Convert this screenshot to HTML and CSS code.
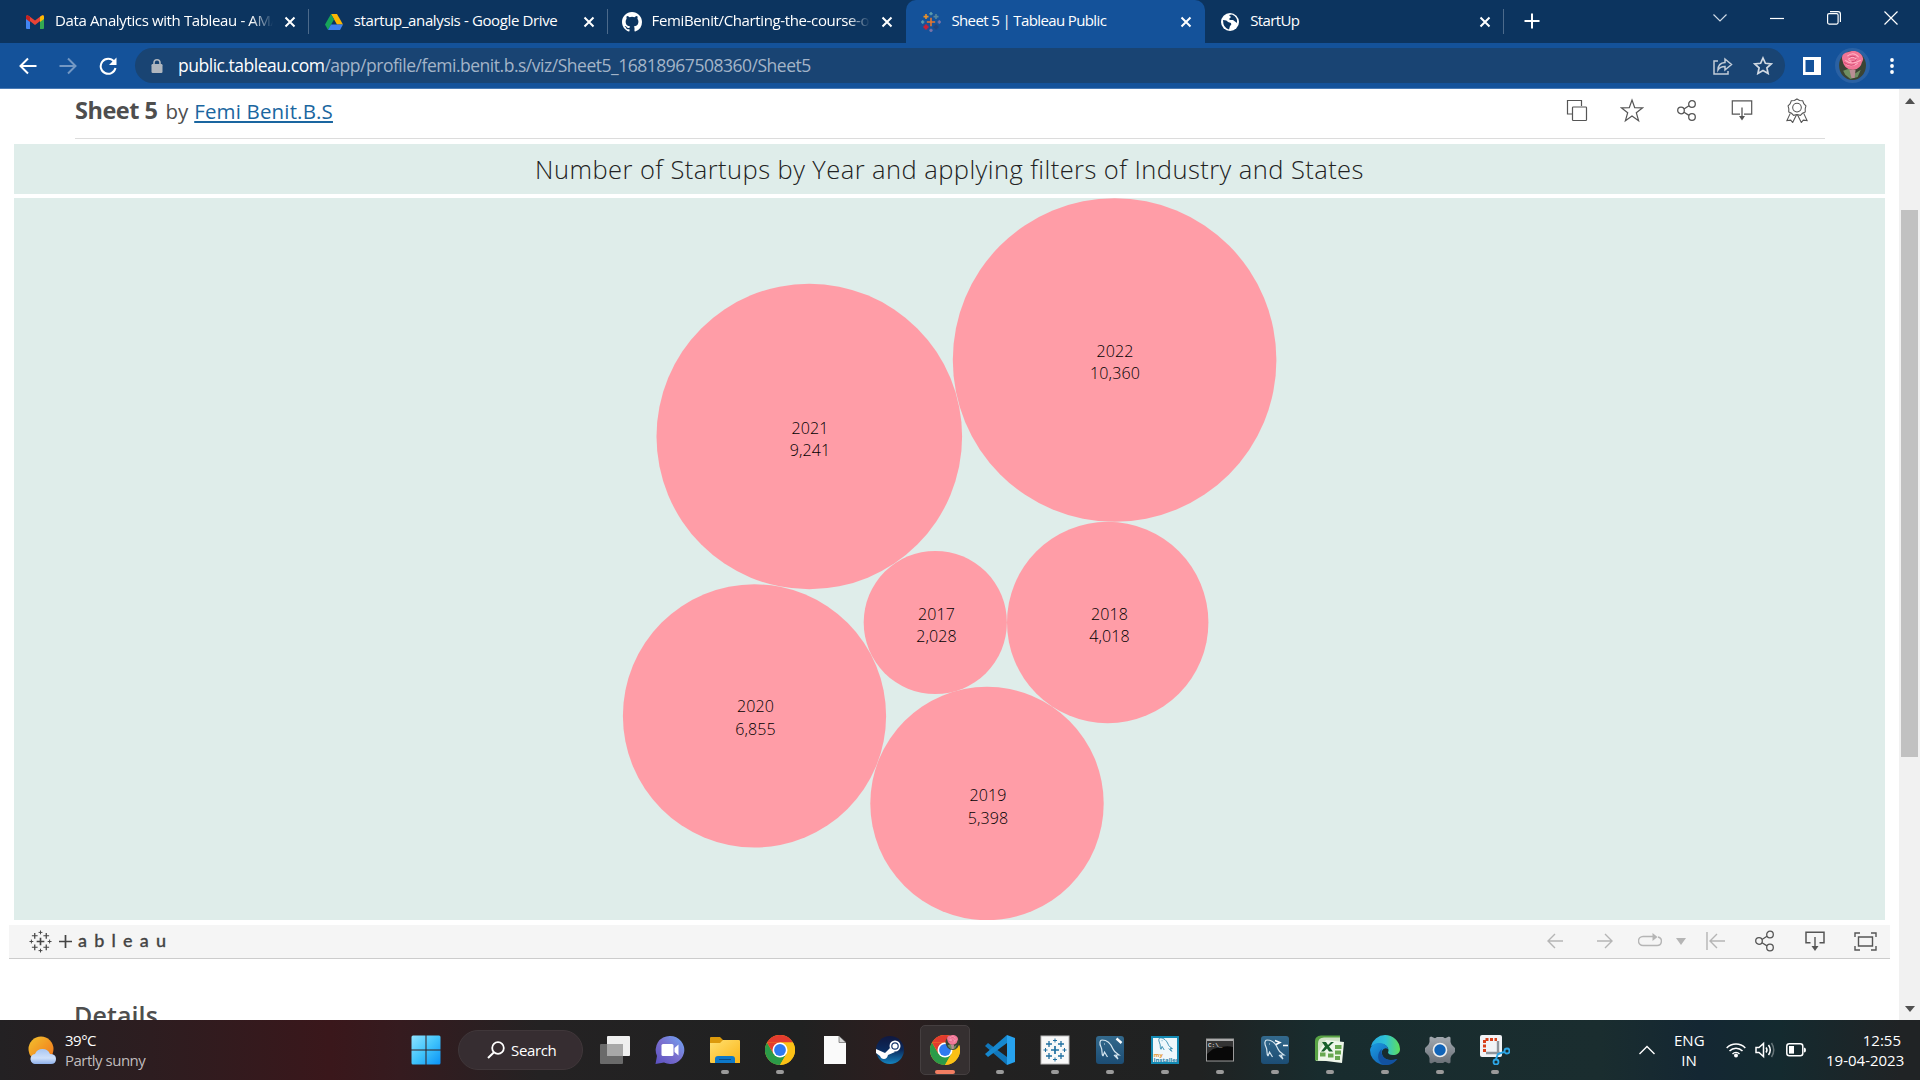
FILE: index.html
```html
<!DOCTYPE html>
<html lang="en"><head><meta charset="utf-8"><title>Sheet 5 | Tableau Public</title><link rel="stylesheet" href="styles.css"></head>
<body>
<svg width="0" height="0" class="defs">
<defs>
<linearGradient id="win" x1="0" y1="0" x2="1" y2="1"><stop offset="0" stop-color="#8fe3ff"/><stop offset=".5" stop-color="#41c4fb"/><stop offset="1" stop-color="#0a92f7"/></linearGradient>
<linearGradient id="sun" x1="0" y1="0" x2="1" y2="1"><stop offset="0" stop-color="#f2c22e"/><stop offset="1" stop-color="#f2701a"/></linearGradient>
<linearGradient id="cloud" x1="0" y1="0" x2="0" y2="1"><stop offset="0" stop-color="#a9c6f2"/><stop offset=".6" stop-color="#cfe0fa"/><stop offset="1" stop-color="#8eb0ea"/></linearGradient>
<linearGradient id="meet" x1="1" y1="0" x2="0" y2="1"><stop offset="0" stop-color="#6fa8f7"/><stop offset=".5" stop-color="#7a6fce"/><stop offset="1" stop-color="#5a50c0"/></linearGradient>
<linearGradient id="folder" x1="0" y1="0" x2="1" y2="1"><stop offset="0" stop-color="#ffe070"/><stop offset="1" stop-color="#fbb517"/></linearGradient>
<linearGradient id="steam" x1="0" y1="0" x2="0" y2="1"><stop offset="0" stop-color="#101840"/><stop offset=".5" stop-color="#0b2a5c"/><stop offset="1" stop-color="#1484c0"/></linearGradient>
<linearGradient id="mysql" x1="0" y1="0" x2="0" y2="1"><stop offset="0" stop-color="#33698c"/><stop offset="1" stop-color="#1c4d74"/></linearGradient>
<linearGradient id="edgeA" x1="0" y1="0" x2="1" y2="0"><stop offset="0" stop-color="#25a8e0"/><stop offset=".5" stop-color="#2fc2d6"/><stop offset="1" stop-color="#5fe05a"/></linearGradient>
<linearGradient id="edgeB" x1="0" y1="0" x2="1" y2="1"><stop offset="0" stop-color="#1b9de2"/><stop offset="1" stop-color="#0f4fa6"/></linearGradient>
<linearGradient id="gear" x1="0" y1="0" x2="0" y2="1"><stop offset="0" stop-color="#a3a9b0"/><stop offset="1" stop-color="#6a7077"/></linearGradient>
<symbol id="close" viewBox="0 0 12 12"><path d="M1.5 1.5l9 9M10.500 1.500l-9 9" stroke="#fff" stroke-width="2" fill="none"/></symbol>
<symbol id="chrome" viewBox="0 0 30 30"><circle cx="15" cy="15" r="15" fill="#fbc116"/><path d="M2 7.500A15 15 0 0 1 28 7.500H15Z" fill="#e33b2e"/><path d="M2 7.500A15 15 0 0 0 15 30L21.500 18.750 8.500 18.750Z" fill="#2b9b48"/><path d="M15 7.500H28A15 15 0 0 1 15 30L21.500 18.750Z" fill="#fbc116"/><path d="M2 7.500L15 7.500 8.500 18.750Z" fill="#e33b2e"/><circle cx="15" cy="15" r="7.500" fill="#fff"/><circle cx="15" cy="15" r="5.900" fill="#2f7af0"/></symbol>
<symbol id="rose" viewBox="0 0 26 28"><ellipse cx="13" cy="14" rx="13" ry="14" fill="#3b4434"/><path d="M4 19l6-2 5 5 6-4-3 7-7 2-5-4Z" fill="#6f8f62"/><path d="M10 18h6l-1 8h-3Z" fill="#b88e94"/><path d="M3 8Q2 2 9 1q7-3 12 2 4 4 1 8-1 6-8 7-9 1-11-10Z" fill="#f27596"/><path d="M8 5q6-5 11 1M6 9q6 5 15 0M9 8q4-4 8 0-4 4-8 0M7 13q6 3 11-1" fill="none" stroke="#ffb3c6" stroke-width="1"/><path d="M10 6q3-2 6 0M5 11q5 4 10 2M12 10q3 1 5-2" fill="none" stroke="#d44a73" stroke-width="1"/></symbol>
<symbol id="globe" viewBox="0 0 18 18"><circle cx="9" cy="9" r="9" fill="#fff"/><path d="M2 7q4 0 5 2l3 1q1 2-1 3l-1 3.500Q2 15 2 7ZM8 2l2 2-2 2 1 1h3l4 3q1-6-5-8.500Z" fill="#0d3560"/></symbol>
<symbol id="github" viewBox="0 0 16 16"><path fill="#fff" d="M8 0C3.580 0 0 3.580 0 8c0 3.540 2.290 6.530 5.470 7.590.4.070.55-.17.550-.38 0-.19-.01-.82-.01-1.490-2.010.37-2.530-.49-2.690-.94-.09-.23-.48-.94-.82-1.130-.28-.15-.68-.52-.01-.53.630-.01 1.080.58 1.230.82.720 1.210 1.870.87 2.330.66.070-.52.280-.87.510-1.070-1.780-.2-3.640-.89-3.640-3.950 0-.87.310-1.590.82-2.150-.08-.2-.36-1.020.08-2.120 0 0 .67-.21 2.200.82a7.600 7.600 0 0 1 4 0c1.530-1.040 2.200-.82 2.200-.82.440 1.100.160 1.920.080 2.120.510.560.82 1.270.82 2.150 0 3.070-1.870 3.750-3.650 3.950.290.250.540.73.540 1.480 0 1.070-.01 1.930-.01 2.200 0 .21.150.46.550.38A8 8 0 0 0 16 8c0-4.420-3.580-8-8-8Z"/></symbol>
<symbol id="plusmark" viewBox="0 0 24 24"><g fill="none" stroke="currentColor" stroke-width="1.300"><path d="M12 8v8M8 12h8" stroke-width="1.700"/><path d="M6 3v6M3 6h6M18 3v6M15 6h6M6 15v6M3 18h6M18 15v6M15 18h6"/><path d="M12 .5v4M10 2.500h4M12 19.500v4M10 21.500h4M2.500 10v4M.5 12h4M21.500 10v4M19.500 12h4" stroke-width="1"/></g></symbol>
<symbol id="share" viewBox="0 0 22 22"><g fill="none" stroke="#555" stroke-width="1.300"><circle cx="5" cy="11" r="3.300"/><circle cx="16" cy="4.500" r="3.300"/><circle cx="16" cy="17.500" r="3.300"/><path d="M8 9.500l5-3.300M8 12.700l5 3.200"/></g></symbol>
<symbol id="download" viewBox="0 0 22 22"><path d="M9 14.700H1.300V1.300h19.400v13.400H13" fill="none" stroke="#555" stroke-width="1.200"/><path d="M11 8v10" stroke="#555" stroke-width="1.300"/><path d="M8 16.500h6l-3 4.500Z" fill="#555"/></symbol>
<symbol id="download-wide" viewBox="0 0 20 21"><path d="M5.500 11.800H1V1.300h18v10.500h-4.500" fill="none" stroke="#555" stroke-width="1.500"/><path d="M10 6v11" stroke="#555" stroke-width="1.400"/><path d="M6.500 15h7L10 20Z" fill="#555" stroke="none"/></symbol>
<symbol id="dolphin" viewBox="0 0 28 28"><path d="M7 20C5 17 7 15 5 11 3 7 4 4 6 4c5 0 9 4 11 9 1 3 3 4 6 6h-3l2 4-4-4M7 20l1.500-4 3 5M8 8h1" fill="none" stroke="currentColor" stroke-width="1.200"/></symbol>
</defs>
</svg>

<header class="browser">
 <div class="tabs">
  <div class="tab"><svg class="fav" viewBox="0 0 18 18"><path d="M0 4v11q0 1 1 1h3V7Z" fill="#4285f4"/><path d="M14 7v9h3q1 0 1-1V4Z" fill="#34a853"/><path d="M0 4q0-3 3-1l6 4.500L15 3q3-2 3 1v1l-9 7-9-7Z" fill="#ea4335"/><path d="M14 4l1-1q3-2 3 1v2l-4 3Z" fill="#fbbc04"/><path d="M0 4q0-2 2-1.500L4 4v5L0 6Z" fill="#c5221f"/></svg><span class="tt fade">Data Analytics with Tableau - AMA</span><svg class="x"><use href="#close"/></svg></div>
  <div class="tab"><svg class="fav" viewBox="0 0 18 18"><path d="M6 1h6l6 10.500h-6Z" fill="#fbb703"/><path d="M6 1l3 5.500L3 17 0 11.500Z" fill="#17a35a"/><path d="M6 11.500h12L15 17H3Z" fill="#3d80ef"/></svg><span class="tt">startup_analysis - Google Drive</span><svg class="x"><use href="#close"/></svg></div>
  <div class="tab nosep"><svg class="fav gh"><use href="#github"/></svg><span class="tt fade">FemiBenit/Charting-the-course-of</span><svg class="x"><use href="#close"/></svg></div>
  <div class="tab active"><svg class="fav tb" viewBox="0 0 24 24"><g fill="none" stroke-width="1.900"><path d="M12 7v10M7 12h10" stroke="#e8762d"/><path d="M6 2.500v6M3 5.500h6" stroke="#eb9129"/><path d="M18 2.500v6M15 5.500h6" stroke="#59879b"/><path d="M6 15v6M3 18h6" stroke="#c72035" stroke-width="3"/><path d="M18 15v6M15 18h6" stroke="#1f447e" stroke-width="3"/><path d="M12 0v4M10 2h4M2 10v4M0 12h4" stroke="#5c9cae"/><path d="M22 10v4M20 12h4M12 20v4M10 22h4" stroke="#7a73a8"/></g></svg><span class="tt tight">Sheet 5 | Tableau Public</span><svg class="x"><use href="#close"/></svg></div>
  <div class="tab"><svg class="fav"><use href="#globe"/></svg><span class="tt tight">StartUp</span><svg class="x"><use href="#close"/></svg></div>
  <svg class="newtab" viewBox="0 0 16 16"><path d="M8 .5v15M.5 8h15" stroke="#fff" stroke-width="2"/></svg>
  <div class="wincontrols">
   <svg viewBox="0 0 14 14"><path d="M.5 3.500L7 10l6.500-6.500" fill="none" stroke="#cfdae6" stroke-width="1.200"/></svg>
   <svg viewBox="0 0 14 14"><path d="M0 7.500h14" stroke="#fff" stroke-width="1.200"/></svg>
   <svg viewBox="0 0 14 14"><rect x=".6" y="2.600" width="10.500" height="10.500" rx="1.500" fill="none" stroke="#fff" stroke-width="1.200"/><path d="M3 .6h8q2.400 0 2.400 2.400v8" fill="none" stroke="#fff" stroke-width="1.200"/></svg>
   <svg viewBox="0 0 14 14"><path d="M.5.5l13 13M13.500.5l-13 13" stroke="#fff" stroke-width="1.200"/></svg>
  </div>
 </div>
 <div class="toolbar">
  <svg class="nav" viewBox="0 0 18 18"><path d="M17.500 9H2M9 1.500L1.500 9 9 16.500" fill="none" stroke="#fff" stroke-width="2"/></svg>
  <svg class="nav" viewBox="0 0 18 18"><path d="M.5 9H16M9 1.500L16.500 9 9 16.500" fill="none" stroke="#7398c4" stroke-width="2"/></svg>
  <svg class="nav" viewBox="0 0 18 18"><path d="M15 4.500A7.500 7.500 0 1 0 16.500 11" fill="none" stroke="#fff" stroke-width="2"/><path d="M17.500.5V8H10Z" fill="#fff"/></svg>
  <div class="omnibox">
   <svg class="lock" viewBox="0 0 12 14"><rect x=".5" y="5" width="11" height="9" rx="1.200" fill="#b0b7bf"/><path d="M3 6V3.800a3 3 0 0 1 6 0V6" fill="none" stroke="#b0b7bf" stroke-width="1.600"/></svg>
   <span class="url"><b>public.tableau.com</b>/app/profile/femi.benit.b.s/viz/Sheet5_16818967508360/Sheet5</span>
   <svg class="oi" viewBox="0 0 20 18"><path d="M5 4H1v13h14v-3" fill="none" stroke="#c2ccd8" stroke-width="1.500"/><path d="M5 13q0-7 7-7.500V2l6.500 5.500L12 13V9.500Q7 9.500 5 13Z" fill="none" stroke="#c2ccd8" stroke-width="1.500"/></svg>
   <svg class="oi st" viewBox="0 0 20 19"><path d="M10 2l2.400 5.300 5.800.6-4.300 3.900 1.200 5.700L10 14.600l-5.100 2.900 1.200-5.700L1.800 7.900l5.800-.6Z" fill="none" stroke="#d2dae3" stroke-width="1.700"/></svg>
  </div>
  <svg class="panel" viewBox="0 0 18 18"><path d="M0 0h18v18H0ZM2.500 3v12H11V3Z" fill="#fff" fill-rule="evenodd"/></svg>
  <div class="avatar"><svg><use href="#rose"/></svg></div>
  <svg class="dots" viewBox="0 0 4 16"><circle cx="2" cy="2" r="1.900"/><circle cx="2" cy="8" r="1.900"/><circle cx="2" cy="14" r="1.900"/></svg>
 </div>
</header>

<div class="page">
 <main>
  <div class="vizhead">
   <h1>Sheet 5</h1><span class="by">by</span><a>Femi Benit.B.S</a>
   <div class="actions">
    <svg viewBox="0 0 24 24"><path d="M7 15.500H2.500v-13.500h14V7.500" fill="none" stroke="#555" stroke-width="1.200"/><rect x="7.500" y="8.500" width="14" height="13.500" rx=".8" fill="none" stroke="#555" stroke-width="1.200"/></svg>
    <svg viewBox="0 0 24 24"><path d="M12 1.500l2.700 7.700 8 .1-6.400 4.900 2.300 8L12 17.500l-6.600 4.700 2.300-8L1.300 9.300l8-.1Z" fill="none" stroke="#555" stroke-width="1.200"/></svg>
    <svg viewBox="-1 -1 24 24"><use href="#share" x="0" y="0" width="22" height="22"/></svg>
    <svg viewBox="-1 -1 24 24"><use href="#download" width="22" height="22"/></svg>
    <svg viewBox="0 0 24 26"><g fill="none" stroke="#555" stroke-width="1.100"><path d="M12 1l2.700 1.600 3.200.3 1.200 3 2.200 2.300-.8 3.100.1 3.200-2.900 1.400L15.500 18 12 17.200 8.500 18l-2.200-2.100-2.900-1.400.1-3.200-.8-3.100 2.200-2.300 1.200-3 3.200-.3Z"/><circle cx="12" cy="10" r="4.500"/><path d="M5 16L1.500 23.500l4-.5 2 2.500 4-8M19 16l3.500 7.500-4-.5-2 2.500-4-8"/></g></svg>
   </div>
  </div>
  <section class="viz">
   <h2>Number of Startups by Year and applying filters of Industry and States</h2>
   <svg class="chart" viewBox="14 198 1871 722">
    <g class="bubbles"><circle cx="1114.600" cy="360" r="161.800"/><circle cx="809.300" cy="436.500" r="152.800"/><circle cx="935.300" cy="622.500" r="71.600"/><circle cx="1107.700" cy="622.500" r="100.700"/><circle cx="754.500" cy="715.900" r="131.600"/><circle cx="987" cy="803.500" r="116.700"/></g>
    <g class="labels">
     <text x="1115" y="356.500">2022</text><text x="1115" y="378.500">10,360</text>
     <text x="810" y="433.500">2021</text><text x="810" y="456">9,241</text>
     <text x="936.500" y="619.500">2017</text><text x="936.500" y="642">2,028</text>
     <text x="1109.500" y="619.500">2018</text><text x="1109.500" y="642">4,018</text>
     <text x="755.500" y="712">2020</text><text x="755.500" y="734.500">6,855</text>
     <text x="988" y="801">2019</text><text x="988" y="823.500">5,398</text>
    </g>
   </svg>
  </section>
  <div class="vizbar">
   <svg class="tlogo"><use href="#plusmark"/></svg>
   <svg class="tplus" viewBox="0 0 13 15"><path d="M6.500 1v13M0 7.500h13" stroke="#444" stroke-width="1.700"/></svg><span class="wordmark">ableau</span>
   <div class="vizicons">
    <svg class="i1" viewBox="0 0 16 16"><path d="M16 8H1M8 1L1 8l7 7"/></svg>
    <svg class="i2" viewBox="0 0 16 16"><path d="M0 8h15M8 1l7 7-7 7"/></svg>
    <svg class="i3" viewBox="0 0 24 16"><path d="M15 3.500H5a4.300 4.300 0 0 0 0 9h14a4.300 4.300 0 0 0 1-8.500"/><path d="M14.500 0v8l5-4Z" fill="#b5b5b5" stroke="none"/></svg>
    <svg class="i4" viewBox="0 0 10 7"><path d="M0 0h10L5 7Z" fill="#b5b5b5" stroke="none"/></svg>
    <svg class="i5" viewBox="0 0 19 20"><path d="M1 1v18M19 10H4M11 3l-7 7 7 7"/></svg>
    <svg class="i6"><use href="#share"/></svg>
    <svg class="i7"><use href="#download-wide"/></svg>
    <svg class="i8" viewBox="0 0 23 19"><path d="M1 5V1h5M17 1h5v4M22 14v4h-5M6 18H1v-4M4.500 5h14v9h-14Z"/></svg>
   </div>
  </div>
  <h3>Details</h3>
 </main>
 <div class="scroll"><svg viewBox="0 0 10 6"><path d="M0 6h10L5 0Z"/></svg><div class="thumb"></div><svg class="down" viewBox="0 0 10 6"><path d="M0 0h10L5 6Z"/></svg></div>
</div>

<footer class="taskbar">
 <div class="weather"><svg viewBox="0 0 28 28"><circle cx="13" cy="13" r="12.500" fill="url(#sun)"/><path d="M8 28a5 5 0 0 1-1-10q2-5 7.500-5T22 18q6 0 6 5t-5 5Z" fill="url(#cloud)"/></svg><div><span>39°C</span><span class="dim">Partly sunny</span></div></div>
 <div class="apps">
  <div class="app"><svg viewBox="0 0 30 30"><path d="M.5 2q0-1.500 1.500-1.500h12.500v14H.5ZM15.500.5H28q1.500 0 1.500 1.500v12.500h-14ZM.5 15.500h14v14H2q-1.500 0-1.500-1.500ZM15.500 15.500h14V28q0 1.500-1.500 1.500H15.500Z" fill="url(#win)"/></svg></div>
  <div class="search"><svg viewBox="0 0 18 18"><circle cx="11" cy="7" r="5.800" fill="none" stroke="#fff" stroke-width="1.800"/><path d="M7 11.200L1 17" stroke="#fff" stroke-width="2"/></svg><span>Search</span></div>
  <div class="app"><svg viewBox="0 0 30 30"><rect x="7" y="1" width="23" height="20" rx="1" fill="#efefef"/><rect x="0" y="9" width="23" height="20" rx="1" fill="#777" opacity=".85"/><path d="M7 9h16v12H7Z" fill="#a8a8a8"/></svg></div>
  <div class="app"><svg viewBox="0 0 30 30"><path d="M15 1a14 14 0 1 1-6 26.500L.5 29 2 21A14 14 0 0 1 15 1Z" fill="url(#meet)"/><rect x="6.500" y="9" width="12" height="12" rx="1.500" fill="#fff"/><path d="M19.500 13l4-3.500v11l-4-3.500Z" fill="#fff"/></svg></div>
  <div class="app run"><svg viewBox="0 0 30 30"><path d="M0 3q0-1 1-1h9l3 3v6H0Z" fill="#dc9a0c"/><path d="M0 8h10l3-3h16q1 0 1 1v22H1q-1 0-1-1Z" fill="url(#folder)"/><path d="M5 28v-4q0-3 3-3h14q3 0 3 3v4Z" fill="#0d78c8"/><path d="M9 24.500h12" stroke="#0b4c86"/></svg></div>
  <div class="app run"><svg><use href="#chrome"/></svg></div>
  <div class="app"><svg viewBox="0 0 30 30"><path d="M4 1h15l7 7v21H4Z" fill="#fafafa"/><path d="M19 1v6.500h7Z" fill="#d8d8d8" stroke="#666" stroke-width=".7"/></svg></div>
  <div class="app"><svg viewBox="0 0 30 30"><circle cx="15" cy="15" r="14" fill="url(#steam)"/><path d="M1 14l9 4 5-5 5 4-7 3q-1 4-4 4T5 21l-4-3Z" fill="#fff"/><circle cx="20" cy="11" r="5.500" fill="#fff"/><circle cx="20" cy="11" r="3.200" fill="#fff" stroke="#17356a" stroke-width="1.200"/></svg></div>
  <div class="app run current"><svg viewBox="0 0 30 30"><use href="#chrome"/><use href="#rose" x="15" y="0" width="15" height="15"/></svg></div>
  <div class="app run"><svg viewBox="0 0 30 30"><path d="M0 11l3-3 19 14v8Z" fill="#1177bb"/><path d="M0 19l3 3L22 8V0Z" fill="#1688cf"/><path d="M22 0l8 3v24l-8 3Z" fill="#27a2ee"/></svg></div>
  <div class="app run"><svg viewBox="0 0 30 30"><rect x="1" y="1" width="28" height="28" fill="#f8f8f8" stroke="#bbb"/><g color="#1f6fa0"><use href="#plusmark" x="3" y="3" width="24" height="24"/></g></svg></div>
  <div class="app run"><svg viewBox="0 0 30 30"><rect x="1" y="1" width="28" height="28" rx="3" fill="url(#mysql)"/><g color="#d5e5ef"><use href="#dolphin" x="1" y="1" width="28" height="28"/></g><path d="M21.500 3.500l5 4.500" stroke="#fff" stroke-width="2.400"/></svg></div>
  <div class="app run"><svg viewBox="0 0 30 30"><rect x="2" y="2" width="26" height="26" fill="#eef7fb" stroke="#138ab4" stroke-width="2"/><g color="#1f7fa8"><use href="#dolphin" x="5" y="0" width="22" height="20"/></g><text x="3.500" y="21.500" class="mi or">my</text><text x="3.500" y="26.500" class="mi">Installer</text></svg></div>
  <div class="app run"><svg viewBox="0 0 30 30"><rect x="1.500" y="4" width="27" height="22" fill="#080808" stroke="#9b9b9b"/><path d="M2 4h26v2H2Z" fill="#aaa"/><path d="M2 6h26v6Q20 10 8 14l-6 5Z" fill="#333"/><text x="3" y="12" class="cmd">C:\_</text></svg></div>
  <div class="app run"><svg viewBox="0 0 30 30"><rect x="1" y="1" width="28" height="28" rx="3" fill="url(#mysql)"/><g color="#d5e5ef"><use href="#dolphin" x="1" y="1" width="28" height="28"/></g><path d="M15 5.500l5 2-4 2M23 10.500h5" stroke="#fff" stroke-width="1.500" fill="none"/></svg></div>
  <div class="app run"><svg viewBox="0 0 30 30"><path d="M1 5l5-4h19v25H1Z" fill="#cfe3c6"/><path d="M0 6q0-5 6-5.500h19v2H9q-6 0-6 6v17H0Z" fill="#58a244"/><path d="M11 5l18 2-2 21-24-3 1-9Z" fill="#eef6ea"/><path d="M20 10h6.500v4H20ZM20 15.500h6v4h-6ZM13 18.500h5.500v4H13ZM20 21h5v4h-5ZM5 17.500h5.500v4H5Z" fill="#68a851"/><path d="M7 7h4l2 3 3-3h3l-5 4.500 4 5h-4l-2-3-3 3H6l4-5Z" fill="#17602a"/></svg></div>
  <div class="app run"><svg viewBox="0 0 30 30"><path d="M15 0A15 15 0 0 1 30 14c0 4-3 6-7 6q-5 0-5-3 1-1 0-4Q15 8 8 9L1 11A15 15 0 0 1 15 0Z" fill="url(#edgeA)"/><path d="M0 15C1 9 6 8 9 8c5 0 9 3 9 6q-4-2-6 2c-1 6 4 11 15 8A15 15 0 0 1 0 15Z" fill="url(#edgeB)"/><path d="M12 14c-2 5 2 11 9 11 3 0 5-.5 6.500-1A15 15 0 0 1 14 30C6 27 7 17 12 14Z" fill="#1252a0"/></svg></div>
  <div class="app run"><svg viewBox="0 0 30 30"><path d="M6 1.500l4 1.700L12 2h6l2 1.200 4-1.700 1.500 1V7l1 2.500L30 13v4l-3.500 3.500-1 2.500v4.500l-1.500 1-4-1.700L18 28h-6l-2-1.200-4 1.700-1.500-1V23l-1-2.500L0 17v-4l3.500-3.500 1-2.500V2.500Z" fill="url(#gear)"/><circle cx="15" cy="15" r="6.500" fill="#1164b8" stroke="#eee" stroke-width="1.600"/></svg></div>
  <div class="app run"><svg viewBox="0 0 30 30"><rect width="22" height="22" rx="2" fill="#f1f3f6"/><path d="M4.500 17V4.500H17" fill="none" stroke="#d8401a" stroke-width="3" stroke-dasharray="3 1.500"/><path d="M6 18h14M18 6v14" stroke="#8d949b" stroke-width="2.400"/><path d="M16 24l2-5 6-2" fill="none" stroke="#2da6e6" stroke-width="2"/><circle cx="27" cy="16" r="2.500" fill="none" stroke="#2da6e6" stroke-width="1.800"/><circle cx="16" cy="27" r="2.500" fill="none" stroke="#2da6e6" stroke-width="1.800"/></svg></div>
 </div>
 <div class="tray">
  <svg class="up" viewBox="0 0 16 10"><path d="M.5 9L8 1.500 15.500 9" fill="none" stroke="#fff" stroke-width="1.400"/></svg>
  <div class="lang"><span>ENG</span><span>IN</span></div>
  <svg class="wifi" viewBox="0 0 20 16"><g fill="none" stroke="#fff" stroke-width="1.500"><path d="M.7 6a13 13 0 0 1 18.600 0M3.500 9a9 9 0 0 1 13 0M6.500 12a5 5 0 0 1 7 0"/></g><circle cx="10" cy="13.500" r="2" fill="#fff"/></svg>
  <svg class="vol" viewBox="0 0 20 18"><g fill="none" stroke="#fff" stroke-width="1.500"><path d="M1 6.500v5h3l4.500 4V2.500L4 6.500ZM11 6.500q2 2.500 0 5M13.500 4q3.500 5 0 10"/><path d="M16.500 2q4.500 7 0 14" opacity=".35"/></g></svg>
  <svg class="bat" viewBox="0 0 20 14"><rect x=".8" y=".8" width="16" height="12" rx="2.500" fill="none" stroke="#fff" stroke-width="1.500"/><rect x="3" y="3" width="5" height="7.600" fill="#fff"/><path d="M18 4.500q2 0 2 2.500t-2 2.500Z" fill="#fff"/></svg>
  <div class="clock"><span>12:55</span><span>19-04-2023</span></div>
 </div>
</footer>
</body></html>
```
FILE: styles.css
```css
*{box-sizing:border-box}
body{margin:0;width:1920px;height:1080px;overflow:hidden;display:flex;flex-direction:column;font-family:"Open Sans","Noto Sans",sans-serif;background:#fff}
.defs{position:absolute}
svg{display:block;flex:none}
h1,h2,h3{margin:0}
.browser{height:89px;flex:none;background:#14529a;border-bottom:1px solid #4a7bb5}
.tabs{height:43px;background:#0c345f;display:flex;padding-left:10px}
.tab{width:298.8px;height:43px;display:flex;align-items:center;padding:0 13px 0 16px;position:relative;color:#fff;font-size:15px}
.tab:not(.nosep):not(.active)::after{content:"";position:absolute;right:0;top:9px;width:1px;height:25px;background:#4c6a8b}
.fav{width:18px;height:18px;margin-right:11px}
.fav.gh{width:20px;height:20px;margin:0 10px 0 -2px}
.fav.tb{width:20px;height:20px;margin:0 10px 0 -1px}
.tt{flex:1;white-space:nowrap;overflow:hidden;margin-right:11px;line-height:24px;margin-top:-4px;letter-spacing:-.37px}
.tight{letter-spacing:-.62px}
.fade{-webkit-mask-image:linear-gradient(90deg,#000 90%,transparent);mask-image:linear-gradient(90deg,#000 90%,transparent)}
.x{width:12px;height:12px}
.active{background:#14529a;border-radius:10px 10px 0 0}
.newtab{width:16px;height:16px;margin:13px 0 0 20px}
.wincontrols{display:flex;gap:43px;margin:11px 0 0 auto;padding-right:22px}
.wincontrols svg{width:14px;height:14px}
.toolbar{height:45px;display:flex;align-items:center;padding-left:19px}
.nav{width:18px;height:18px;margin-right:22px}
.omnibox{width:1650px;height:35px;border-radius:18px;background:#194473;display:flex;align-items:center;padding:0 12px 0 16px;margin-left:-4px}
.lock{width:12px;height:14px;margin-right:15px}
.url{flex:1;font-size:17.5px;letter-spacing:-.48px;color:#a3b4c8;line-height:30px;margin-top:-1px}
.url b{font-weight:400;color:#fff}
.oi{width:20px;height:18px}
.st{width:20px;height:19px;margin-left:20px}
.panel{width:18px;height:18px;margin-left:18px}
.avatar{width:35px;height:35px;border-radius:50%;background:#2a61a3;margin-left:14px;display:grid;place-items:center}
.avatar svg{width:27px;height:29px}
.dots{width:4px;height:16px;margin-left:20px;fill:#fff}
.page{height:931px;flex:none;display:flex;overflow:hidden}
main{width:1899px;height:931px;overflow:hidden}
.vizhead{height:50px;margin:0 74px 0 75px;border-bottom:1px solid #dcdcdc;display:flex;align-items:baseline;color:#4e4e4e;font-size:22px;padding-top:4px}
h1{font-size:23.500px;font-weight:700;line-height:34px;letter-spacing:-.5px}
.by{margin-left:8px;font-size:20.500px}
.vizhead a{margin-left:6px;color:#1a66a0;text-decoration:underline;font-size:20.500px;letter-spacing:.15px}
.actions{margin-left:auto;align-self:flex-start;display:flex;gap:31px;padding:5px 16px 0 0}
.actions svg{width:24px;height:25px}
.viz{margin:5px 14px 0}
h2{height:50px;line-height:51px;background:#dfedea;text-align:center;font-weight:300;font-size:25.500px;letter-spacing:.44px;color:#222;white-space:nowrap}
.chart{width:1871px;height:722px;background:#dfedea;margin-top:4px}
.bubbles{fill:#ff9da7}
.labels{font-size:16px;font-weight:300;text-anchor:middle;fill:#000;letter-spacing:.12px}
.vizbar{height:34px;margin:5px 9px 0;background:#f5f5f5;border-bottom:1px solid #ccc;display:flex;align-items:center;padding-left:20px;color:#444}
.tlogo{width:23px;height:23px;margin-top:-1px}
.tplus{width:13px;height:15px;margin:-1px 0 0 7px}
.wordmark{font-family:Lato,sans-serif;font-size:18px;font-weight:500;letter-spacing:7.2px;margin:-3px 0 0 6px;color:#444;line-height:30px;-webkit-text-stroke:.3px #444}
.vizicons{margin:-1px 0 0 auto;display:flex;align-items:center;padding-right:13px}
.vizicons svg{fill:none;stroke:#b5b5b5;stroke-width:1.400}
.i1,.i2{width:16px;height:16px}.i2{margin-left:34px}
.i3{width:24px;height:16px;margin-left:25px}.i4{width:10px;height:7px;margin-left:14px}
.i5{width:19px;height:20px;margin-left:20px}.i6{width:22px;height:22px;margin-left:29px}
.i7{width:20px;height:21px;margin-left:29px}.vizicons .i8{width:23px;height:19px;margin-left:29px;stroke:#555}
h3{margin:38px 0 0 74px;font-size:25px;font-weight:600;color:#4e4e4e;line-height:36px;letter-spacing:.1px}
.scroll{width:21px;background:#f1f1f1;display:flex;flex-direction:column;align-items:center;padding:9px 0 8px}
.scroll svg{width:10px;height:6px;fill:#505050}
.thumb{width:17px;height:547px;background:#c1c1c1;margin-top:106px}
.down{margin-top:auto!important}
.taskbar{height:60px;flex:none;display:flex;align-items:center;color:#fff;background:linear-gradient(90deg,#232123 0,#2d1d20 150px,#3a171b 330px,#351b1f 400px,#242223 540px,#202121 800px,#2c1e1f 890px,#222121 980px,#202222 1200px,#182c2e 1320px,#1a2d2f 1600px,#142733 1700px,#142a2f 1780px,#202325 1900px)}
.weather{width:382px;display:flex;align-items:center;padding-left:28px;font-size:15px}
.weather svg{width:28px;height:28px;margin-right:9px}
.weather span,.lang span,.clock span{display:block;line-height:20px}
.weather span{letter-spacing:-.5px}
.weather .dim{color:#c0bcbd}
.apps{display:flex;gap:5px;margin-left:19px}
.app{width:50px;height:50px;border-radius:5px;display:grid;place-items:center;position:relative}
.app svg{width:30px;height:30px}
.run::after{content:"";position:absolute;left:21px;bottom:1px;width:8px;height:4px;border-radius:2px;background:#9a9a9a}
.current{background:#352f30;border:1px solid #453f40}
.current::after{left:14px;bottom:0;width:20px;background:#f27e62}
.search{width:125px;height:40px;border-radius:20px;background:#362d31;border:1px solid #40373a;display:flex;align-items:center;padding-left:28px;font-size:15px;margin:5px 2px 0 2px}
.search svg{width:18px;height:18px;margin-right:6px}
.search span{letter-spacing:-.35px}
.mi{font-size:6px;font-weight:700;fill:#1f7fa8}.or{fill:#e59a36}
.cmd{font-family:"Liberation Mono",monospace;font-size:6px;fill:#fff}
.tray{display:flex;align-items:center;margin-left:auto;padding-right:19px;font-size:15px}
.up{width:16px;height:10px}
.lang{text-align:center;width:30px;margin-left:19px}
.wifi{width:20px;height:16px;margin-left:22px}
.vol{width:20px;height:18px;margin-left:9px}
.bat{width:20px;height:14px;margin-left:11px}
.clock{text-align:right;margin-left:20px;width:75px;white-space:nowrap}
```
